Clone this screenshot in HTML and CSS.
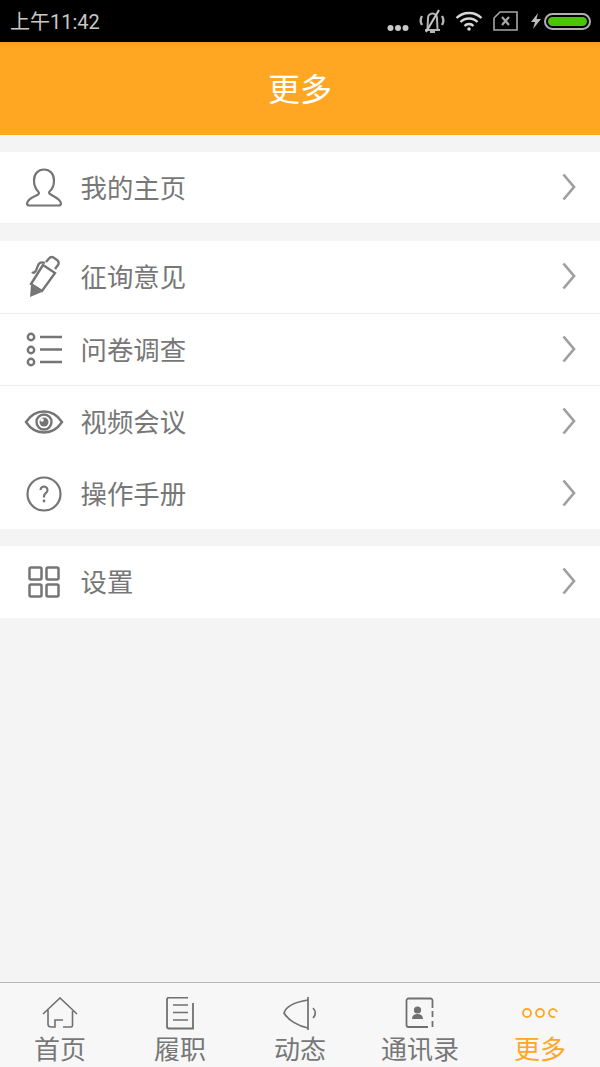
FILE: index.html
```html
<!DOCTYPE html>
<html lang="zh">
<head>
<meta charset="utf-8">
<title>更多</title>
<link rel="stylesheet" href="styles.css">
</head>
<body>
<div class="app">
  <div class="status">
    <span class="time">上午11:42</span>
    <div class="status-icons">
      <svg class="s-dots" width="22" height="8" viewBox="0 0 22 8"><circle cx="3.500" cy="4" r="3"/><circle cx="11" cy="4" r="3"/><circle cx="18.500" cy="4" r="3"/></svg>
      <svg class="s-bell" width="26" height="24" viewBox="0 0 26 24" fill="none" stroke="#b5b5b5" stroke-width="2"><path d="M8.500 20L9 9a4.500 4.500 0 0 1 9 0l.5 11M6 21h15M11 23h5"/><path d="M3 7C1.200 10 1.200 13 3 16M23 7c1.800 3 1.800 6 0 9" stroke-width="2.400"/><path d="M7 23L20 1" stroke="#c8c8c8"/></svg>
      <svg class="s-wifi" width="28" height="20" viewBox="0 0 28 20" fill="none" stroke="#d8d8d8" stroke-width="2.400"><path d="M1.500 7a18 18 0 0 1 25 0M5.500 11a12 12 0 0 1 17 0M9.500 15a6 6 0 0 1 9 0"/><circle cx="14" cy="18" r="1.800" fill="#d8d8d8" stroke="none"/></svg>
      <svg class="s-sim" width="25" height="20" viewBox="0 0 25 20" fill="none" stroke="#a8a8a8" stroke-width="1.600"><path d="M7 1h17v18H1V7z"/><path d="M9 6l7 8M16 6l-7 8" stroke-width="2.200"/></svg>
      <svg class="s-bolt" width="10" height="16" viewBox="0 0 10 16"><path d="M7 0L0 9h4l-2 7 8-10H5.500z" fill="#bdbdbd"/></svg>
      <div class="battery"><div class="battery-fill"></div></div>
    </div>
  </div>
  <header class="title-bar">更多</header>
  <main class="content">
    <section class="group">
      <div class="row">
        <svg class="row-icon" width="40" height="40" viewBox="0 0 40 40" fill="none" stroke="#757575" stroke-width="2.200"><path d="M20 1.500c-6 0-10 4.500-10 11 0 5 2 9 4.500 11.500.8.800.5 2-.8 2.800C10 28.500 3 31 3 35.500c0 1.500 1 2 2.500 2h29c1.500 0 2.500-.5 2.500-2 0-4.500-7-7-10.700-9.200-1.300-.8-1.600-2-.8-2.800C28 21.500 30 17.500 30 12.500 30 6 26 1.500 20 1.500z"/></svg>
        <span class="label">我的主页</span>
        <svg class="chev" width="14" height="28" viewBox="0 0 14 28"><path d="M1.500 1.500L12 14 1.500 26.500" /></svg>
      </div>
    </section>
    <section class="group">
      <div class="row line">
        <svg class="row-icon" width="40" height="44" viewBox="0 0 40 44" fill="none" stroke="#757575" stroke-width="2.400"><path d="M19 10L31 18 18 36 7 29z"/><path d="M22 7l3-3.500a3.500 3.500 0 0 1 4.500-1L33 5a3.500 3.500 0 0 1 1 5l-3 4" /><path d="M21 8c-5-2-7 1-8 5-.7 3-3 6-5 4"/><path d="M7 30l11 7-12 5z" fill="#757575" stroke="none"/></svg>
        <span class="label">征询意见</span>
        <svg class="chev" width="14" height="28" viewBox="0 0 14 28"><path d="M1.500 1.500L12 14 1.500 26.500" /></svg>
      </div>
      <div class="row line">
        <svg class="row-icon" width="40" height="40" viewBox="0 0 40 40" fill="none" stroke="#757575" stroke-width="2.400"><circle cx="7" cy="7" r="3.200"/><circle cx="7" cy="20" r="3.200"/><circle cx="7" cy="32" r="3.200"/><path d="M16 7h22M16 19.500h22M16 32h22"/></svg>
        <span class="label">问卷调查</span>
        <svg class="chev" width="14" height="28" viewBox="0 0 14 28"><path d="M1.500 1.500L12 14 1.500 26.500" /></svg>
      </div>
      <div class="row">
        <svg class="row-icon" width="40" height="40" viewBox="0 0 40 40" fill="none" stroke="#757575" stroke-width="2.400"><path d="M2 20C7 12.500 13 9.500 20 9.500S33 12.500 38 20C33 27.500 27 30.500 20 30.500S7 27.500 2 20z"/><circle cx="20" cy="20" r="7.500"/><circle cx="20" cy="20" r="4.500" fill="#757575" stroke="none"/><circle cx="18" cy="18" r="1.800" fill="#fff" stroke="none"/></svg>
        <span class="label">视频会议</span>
        <svg class="chev" width="14" height="28" viewBox="0 0 14 28"><path d="M1.500 1.500L12 14 1.500 26.500" /></svg>
      </div>
      <div class="row short">
        <svg class="row-icon" width="40" height="40" viewBox="0 0 40 40" fill="none" stroke="#757575" stroke-width="2.200"><circle cx="20" cy="20" r="16.500"/><path d="M16.500 16a3.500 3.500 0 1 1 5.500 2.900c-1.200.9-2 1.600-2 3.100v1.500"/><circle cx="20" cy="27" r="1.400" fill="#757575" stroke="none"/></svg>
        <span class="label">操作手册</span>
        <svg class="chev" width="14" height="28" viewBox="0 0 14 28"><path d="M1.500 1.500L12 14 1.500 26.500" /></svg>
      </div>
    </section>
    <section class="group">
      <div class="row">
        <svg class="row-icon" width="40" height="40" viewBox="0 0 40 40" fill="none" stroke="#757575" stroke-width="2.500"><rect x="5.500" y="5.500" width="12" height="12" rx="1.500"/><rect x="22.500" y="5.500" width="12" height="12" rx="1.500"/><rect x="5.500" y="22.500" width="12" height="12" rx="1.500"/><rect x="22.500" y="22.500" width="12" height="12" rx="1.500"/></svg>
        <span class="label">设置</span>
        <svg class="chev" width="14" height="28" viewBox="0 0 14 28"><path d="M1.500 1.500L12 14 1.500 26.500" /></svg>
      </div>
    </section>
  </main>
  <nav class="tabs">
    <div class="tab">
      <svg width="36" height="34" viewBox="0 0 36 34" fill="none" stroke="#707070" stroke-width="1.600"><path d="M1 17L18 1l17 16M6 13v14a3 3 0 0 0 3 3h4v-7h8M21 30h8a1.500 1.500 0 0 0 1.500-1.500V14"/></svg>
      <span>首页</span>
    </div>
    <div class="tab">
      <svg width="36" height="34" viewBox="0 0 36 34" fill="none" stroke="#707070" stroke-width="1.800"><path d="M26 .5H7a2 2 0 0 0-2 2v27a2 2 0 0 0 2 2h24V6"/><path d="M11 8h15M11 15.500h15M11 23h15" stroke-width="1.400"/></svg>
      <span>履职</span>
    </div>
    <div class="tab">
      <svg width="36" height="34" viewBox="0 0 36 34" fill="none" stroke="#707070" stroke-width="1.700"><path d="M26 0v33"/><path d="M26 3C14 5 4 9 2 16c4 7 14 13 24 15"/><path d="M31 11c3 3 3 7 0 10"/></svg>
      <span>动态</span>
    </div>
    <div class="tab">
      <svg width="36" height="34" viewBox="0 0 36 34" fill="none" stroke="#707070" stroke-width="1.800"><path d="M30.500 11V3.500a2 2 0 0 0-2-2H6.500a2 2 0 0 0-2 2V28a2 2 0 0 0 2 2H26"/><path d="M30.500 14v6M30.500 24v6"/><circle cx="15.500" cy="13" r="3.600" fill="#707070" stroke="none"/><path d="M10 22c0-3 2-5 5.500-5s5.500 2 5.500 5z" fill="#707070" stroke="none"/></svg>
      <span>通讯录</span>
    </div>
    <div class="tab active">
      <svg width="36" height="34" viewBox="0 0 36 34" fill="none" stroke="#ffa722" stroke-width="1.800"><circle cx="5" cy="16" r="4"/><circle cx="18" cy="16" r="4"/><path d="M34.900 15A4 4 0 1 0 33 19.500"/></svg>
      <span>更多</span>
    </div>
  </nav>
</div>
</body>
</html>
```
FILE: styles.css
```css
* { box-sizing: border-box; }
html, body { margin: 0; padding: 0; }
body {
  font-family: "Roboto", "Noto Sans CJK SC", sans-serif;
  background: #f4f4f4;
}
.app {
  width: 600px;
  height: 1067px;
  display: flex;
  flex-direction: column;
  overflow: hidden;
  background: #f4f4f4;
}
.status {
  flex: 0 0 42px;
  background: #000;
  display: flex;
  align-items: center;
  justify-content: space-between;
  padding: 0 9px 0 10px;
}
.time { color: #c8c8c8; font-size: 20px; padding-bottom: 2px; }
.status-icons { display: flex; align-items: center; }
.status-icons svg { display: block; }
.s-dots { fill: #c8c8c8; margin: 13px 10px 0 0; }
.s-bell { margin-right: 10px; }
.s-wifi { margin-right: 10px; }
.s-sim { margin-right: 13px; }
.s-bolt { margin-right: 3px; }
.battery {
  width: 47px;
  height: 17px;
  border: 2px solid #b0b0b0;
  border-radius: 9px;
  padding: 2px;
}
.battery-fill { height: 100%; background: #4cc400; border-radius: 5px; }
.title-bar {
  flex: 0 0 93px;
  background: linear-gradient(#f59f20 0, #ffa722 6px);
  color: #fff;
  font-size: 32px;
  display: flex;
  align-items: center;
  justify-content: center;
  padding-bottom: 3px;
}
.content { flex: 1; min-height: 0; padding-top: 17px; }
.group { background: #fff; margin-bottom: 17px; }
.row {
  height: 72px;
  display: flex;
  align-items: center;
  padding: 0 24px;
}
.group:first-child .row { border-bottom: 1px solid #efefef; }
.line { border-bottom: 1px solid #ececec; }
.line:first-child { height: 73px; }
.row.short { height: 71px; }
.row-icon { flex: none; display: block; }
.label {
  flex: 1;
  margin-left: 16.500px;
  font-size: 26.400px;
  color: #777;
  padding-bottom: 3px;
}
.chev { flex: none; fill: none; stroke: #9f9f9f; stroke-width: 2.700; margin-bottom: 2px; }
.tabs {
  flex: 0 0 85px;
  display: flex;
  background: #f7f7f7;
  border-top: 1px solid #b8b8b8;
}
.tab {
  flex: 1;
  display: flex;
  flex-direction: column;
  align-items: center;
  gap: 4px;
  padding-top: 14px;
  color: #777;
  font-size: 26px;
  line-height: 30px;
}
.tab svg { display: block; flex: none; }
.tab.active { color: #ffa722; }
```
